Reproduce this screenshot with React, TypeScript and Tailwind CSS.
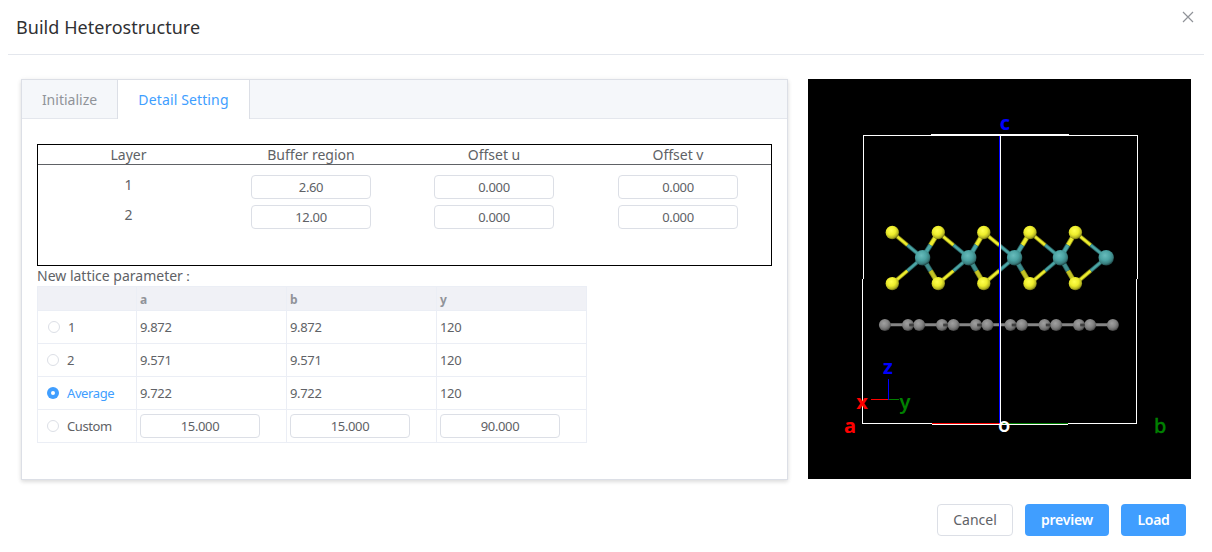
import React from "react";

const YELLOW_X = [892.3, 938.3, 983.8, 1030, 1075.4];
const TEAL_X = [922.6, 968.8, 1014.6, 1060.4, 1106.2];
const GREY_X = [884.9, 908, 919.2, 942, 953.5, 976, 987.5, 1010.5, 1021.9, 1044.6, 1056.2, 1079, 1090.2, 1112.9];
const YELLOW_Y = [232.5, 283.6];
const TEAL_Y = 257.7;

function Bond({ x1, y1, x2, y2, w, dark }: { x1: number; y1: number; x2: number; y2: number; w: number; dark?: boolean }) {
  const mx = (x1 + x2) / 2;
  const my = (y1 + y2) / 2;
  return (
    <g>
      <line x1={x1} y1={y1} x2={mx} y2={my} stroke="#8f8f18" strokeWidth={w} />
      <line x1={x1} y1={y1} x2={mx} y2={my} stroke={dark ? "#c4c424" : "#eded2e"} strokeWidth={w - 1.6} />
      <line x1={mx} y1={my} x2={x2} y2={y2} stroke="#2b6464" strokeWidth={w} />
      <line x1={mx} y1={my} x2={x2} y2={y2} stroke={dark ? "#3f8d8d" : "#4aa5a5"} strokeWidth={w - 1.6} />
    </g>
  );
}

function Viewer() {
  return (
    <svg viewBox="808 79 383 400" className="h-[400px] w-[383px] shrink-0 bg-black">
      <defs>
        <radialGradient id="sy" cx="0.42" cy="0.36" r="0.65">
          <stop offset="0" stopColor="#ffff50" />
          <stop offset="0.5" stopColor="#eeee2c" />
          <stop offset="0.8" stopColor="#b8b822" />
          <stop offset="1" stopColor="#66660f" />
        </radialGradient>
        <radialGradient id="st" cx="0.42" cy="0.36" r="0.65">
          <stop offset="0" stopColor="#68bcbc" />
          <stop offset="0.5" stopColor="#4ba3a3" />
          <stop offset="0.8" stopColor="#3a8080" />
          <stop offset="1" stopColor="#1f4747" />
        </radialGradient>
        <radialGradient id="sg" cx="0.42" cy="0.36" r="0.65">
          <stop offset="0" stopColor="#a0a0a0" />
          <stop offset="0.5" stopColor="#868686" />
          <stop offset="0.8" stopColor="#686868" />
          <stop offset="1" stopColor="#3a3a3a" />
        </radialGradient>
      </defs>
      {YELLOW_X.map((x, i) =>
        YELLOW_Y.map((y) => (
          <g key={`${x}-${y}`}>
            {i > 0 && <Bond x1={x} y1={y} x2={TEAL_X[i - 1]} y2={TEAL_Y} w={5} dark={y > 260} />}
            <Bond x1={x} y1={y} x2={TEAL_X[i]} y2={TEAL_Y} w={4} />
          </g>
        ))
      )}
      <line x1="884.7" x2="1112.7" y1="324.8" y2="324.8" stroke="#858585" strokeWidth="3" />
      {GREY_X.map((x) => (
        <circle key={x} cx={x} cy="325" r="6" fill="url(#sg)" />
      ))}
      {GREY_X.slice(1, -1).map((x, i) =>
        i % 2 === 0 ? <rect key={x} x={x + 1.2} y="323.6" width="4.6" height="2.8" fill="#3f3f3f" /> : null
      )}
      {YELLOW_X.map((x) =>
        YELLOW_Y.map((y) => <circle key={`${x}-${y}`} cx={x} cy={y} r="6.7" fill="url(#sy)" />)
      )}
      <g shapeRendering="crispEdges">
        <rect x="863" y="135" width="275" height="1" fill="#fff" />
        <rect x="931" y="134" width="138" height="1" fill="#fff" />
        <rect x="863" y="135" width="1" height="144" fill="#fff" />
        <rect x="862" y="279" width="1" height="145" fill="#fff" />
        <rect x="1137" y="135" width="1" height="144" fill="#fff" />
        <rect x="1136" y="279" width="1" height="145" fill="#fff" />
        <rect x="862" y="423" width="70" height="1" fill="#fff" />
        <rect x="1068" y="423" width="69" height="1" fill="#fff" />
        <rect x="932" y="423" width="68" height="1" fill="#f00" />
        <rect x="1001" y="423" width="67" height="1" fill="#008000" />
        <rect x="932" y="424" width="136" height="1" fill="#fff" />
        <rect x="999" y="136" width="1" height="287" fill="#00f" />
        <rect x="1000" y="135" width="1" height="289" fill="#fff" />
        <rect x="871" y="399" width="17" height="1" fill="#f00" />
        <rect x="889" y="399" width="10" height="1" fill="#008000" />
        <rect x="888" y="379" width="1" height="21" fill="#00f" />
      </g>
      {TEAL_X.map((x) => (
        <circle key={x} cx={x} cy={TEAL_Y} r="7.7" fill="url(#st)" />
      ))}
      <g fontFamily="'Noto Sans', sans-serif" fontSize="20" fontWeight="700" textAnchor="middle">
        <text x="1005" y="129.5" fill="#00f">c</text>
        <text x="888" y="374" fill="#00f">z</text>
        <text x="862" y="409" fill="#f00">x</text>
        <text x="905" y="409" fill="#008000" fontWeight="600">y</text>
        <text x="850" y="433" fill="#f00">a</text>
        <text x="1160.3" y="433" fill="#008000" fontWeight="500" stroke="#008000" strokeWidth="0.3">b</text>
        <text x="1004.2" y="432" fill="#fff" fontWeight="600">o</text>
      </g>
    </svg>
  );
}

function NumberInput({ value }: { value: string }) {
  return (
    <input
      defaultValue={value}
      className="block h-6 w-[120px] rounded-[4px] border border-[#dcdfe6] bg-white p-0 text-center text-[13px] tracking-[-0.35px] text-[#606266] outline-none"
    />
  );
}

function Radio({ label, checked, shift }: { label: string; checked?: boolean; shift?: boolean }) {
  return (
    <div className={shift ? "flex items-center pl-2.5" : "flex items-center pl-[9px]"}>
      <span
        className={
          checked
            ? "flex size-3 items-center justify-center rounded-full bg-[#409eff]"
            : "size-3 rounded-full border border-[#dcdfe6] bg-white"
        }
      >
        {checked && <span className="size-1 rounded-full bg-white" />}
      </span>
      <span
        className={
          checked
            ? "pt-0.5 pl-2 tracking-[-0.4px] text-[#409eff]"
            : label === "Custom"
              ? "pt-0.5 pl-2 tracking-[-0.4px]"
              : "pt-0.5 pl-2"
        }
      >
        {label}
      </span>
    </div>
  );
}

const LAYERS = [
  ["1", "2.60", "0.000", "0.000"],
  ["2", "12.00", "0.000", "0.000"],
];

const LATTICE = [
  ["1", "9.872", "9.872", "120"],
  ["2", "9.571", "9.571", "120"],
  ["Average", "9.722", "9.722", "120"],
];

const cell = "flex items-center border-r border-b border-[#ebeef5]";

export default function App() {
  return (
    <div className="flex h-[552px] w-[1212px] flex-col overflow-hidden bg-white font-['Noto_Sans',sans-serif] text-[#606266]">
      <header className="mx-2 flex h-[55px] shrink-0 items-start justify-between border-b border-[#e4e7ed] pl-2">
        <h1 className="mt-[15px] text-[18px] leading-6 tracking-[0.05px] text-[#303133]">Build Heterostructure</h1>
        <svg viewBox="0 0 12 12" className="mt-[11px] mr-[10px] size-3" fill="none" stroke="#909399" strokeWidth="1.2">
          <path d="M1 1l10 10M11 1L1 11" />
        </svg>
      </header>

      <main className="mt-6 flex gap-5 pl-[21px]">
        <section className="h-[401px] w-[767px] shrink-0 border border-[#dcdfe6] bg-white shadow-[0_2px_4px_0_rgba(0,0,0,0.12),0_0_6px_0_rgba(0,0,0,0.04)]">
          <nav className="flex h-[39px] border-b border-[#e4e7ed] bg-[#f5f7fa] text-[14px]">
            <div className="flex w-[95px] items-center justify-center text-[#909399]">Initialize</div>
            <div className="-mb-px flex w-[133px] items-center justify-center border-x border-[#dcdfe6] bg-white tracking-[0.13px] text-[#409eff]">
              Detail Setting
            </div>
          </nav>

          <div className="px-[15px] pt-[25px]">
            <div className="h-[122px] w-[735px] border border-black text-[14px]">
              <div className="grid h-5 grid-cols-[181px_184px_182px_186px] border-b border-[#606266] text-center leading-[19px]">
                <span>Layer</span>
                <span>Buffer region</span>
                <span>Offset u</span>
                <span>Offset v</span>
              </div>
              <div className="flex flex-col gap-1.5 pt-2.5">
                {LAYERS.map(([n, ...values]) => (
                  <div key={n} className="grid h-6 grid-cols-[181px_184px_182px_186px] justify-items-center">
                    <span className="leading-5">{n}</span>
                    {values.map((v, i) => (
                      <NumberInput key={i} value={v} />
                    ))}
                  </div>
                ))}
              </div>
            </div>

            <p className="h-5 text-[14px] leading-5">
              New lattice parameter<span className="-ml-0.5">：</span>
            </p>

            <div className="w-[550px] border-t border-l border-[#ebeef5] text-[13px]">
              <div className="grid h-6 grid-cols-[99px_150px_150px_150px] bg-[#f0f1f6] text-[12px] font-bold text-[#909399]">
                {["", "a", "b", "y"].map((h) => (
                  <div key={h} className={`${cell} pt-0.5 pl-[3px]`}>{h}</div>
                ))}
              </div>
              {LATTICE.map(([name, ...values]) => (
                <div key={name} className="grid h-[33px] grid-cols-[99px_150px_150px_150px]">
                  <div className={cell}>
                    <Radio label={name} checked={name === "Average"} shift={name === "1"} />
                  </div>
                  {values.map((v, i) => (
                    <div key={i} className={`${cell} pt-0.5 pl-[3px] tracking-[-0.35px]`}>{v}</div>
                  ))}
                </div>
              ))}
              <div className="grid h-[33px] grid-cols-[99px_150px_150px_150px]">
                <div className={cell}>
                  <Radio label="Custom" />
                </div>
                {["15.000", "15.000", "90.000"].map((v, i) => (
                  <div key={i} className={`${cell} pl-[3px]`}>
                    <NumberInput value={v} />
                  </div>
                ))}
              </div>
            </div>
          </div>
        </section>
        <Viewer />
      </main>

      <footer className="mt-6 flex justify-end gap-3 pr-[26px] text-[14px]">
        <button className="h-8 w-[76px] rounded-[4px] border border-[#dcdfe6] bg-white pb-0.5">Cancel</button>
        <button className="h-8 w-[84px] rounded-[4px] bg-[#409eff] pb-0.5 font-semibold tracking-[-0.25px] text-white">preview</button>
        <button className="h-8 w-[65px] rounded-[4px] bg-[#409eff] pb-0.5 font-semibold tracking-[-0.25px] text-white">Load</button>
      </footer>
    </div>
  );
}
